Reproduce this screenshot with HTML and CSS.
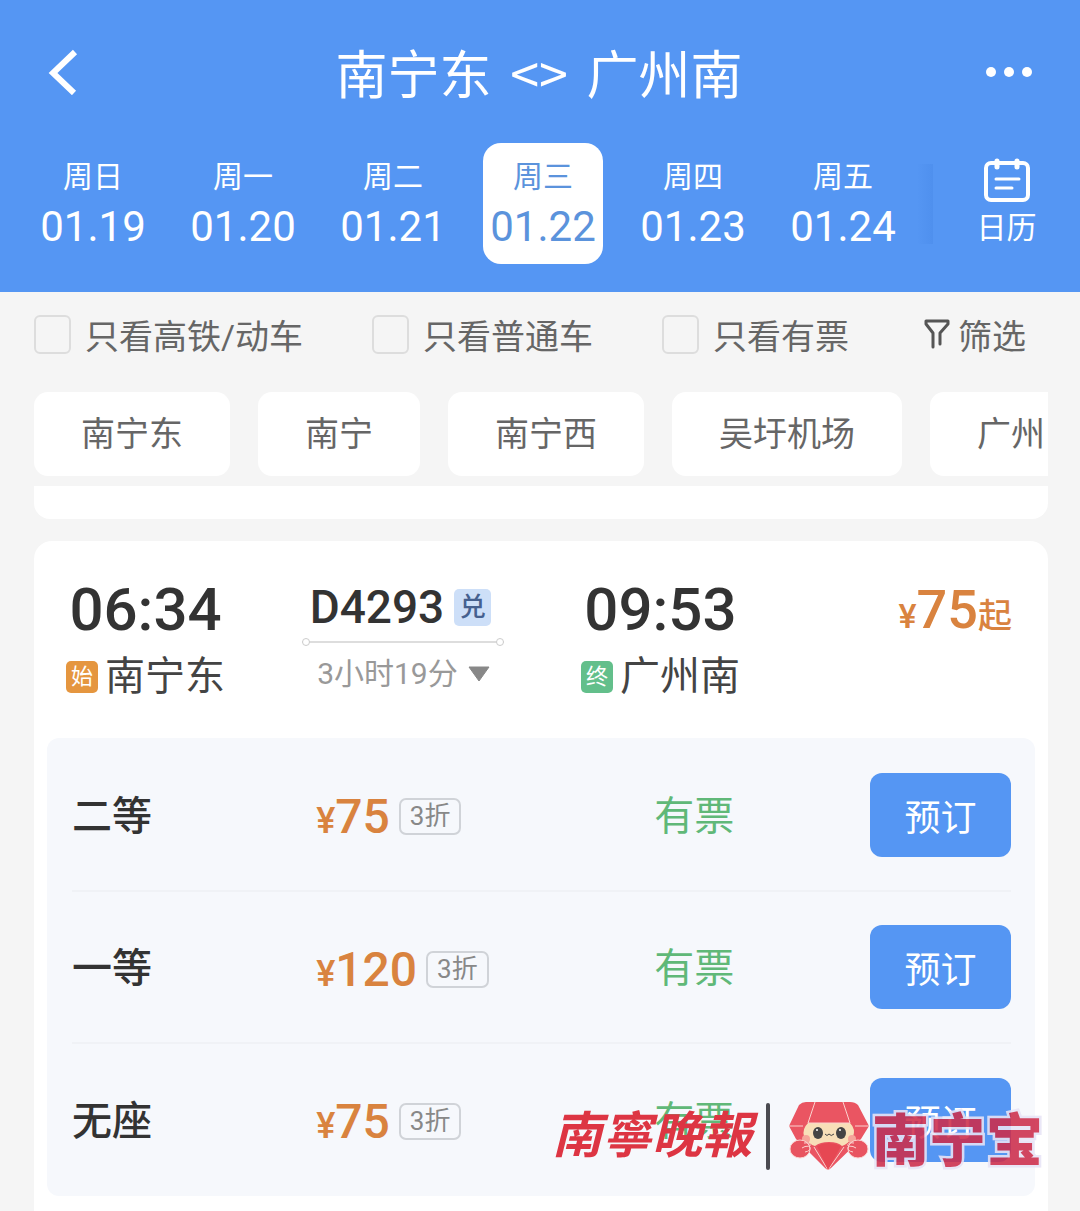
FILE: index.html
```html
<!DOCTYPE html>
<html lang="zh-CN">
<head>
    <meta charset="UTF-8">
    <meta name="viewport" content="width=device-width, initial-scale=1.0">
    <title>南宁东 - 广州南 车票查询</title>
    <link rel="stylesheet" href="styles.css">
</head>
<body>
    <header class="header">
        <div class="title-bar">
            <button class="icon-btn" type="button" aria-label="返回">
                <svg width="32" height="46" viewBox="0 0 32 46"><path d="M29 3 L7 24 L28 44" fill="none" stroke="#fff" stroke-width="6"/></svg>
            </button>
            <h1>南宁东 <span>&lt;&gt;</span> 广州南</h1>
            <button class="icon-btn" type="button" aria-label="更多">
                <svg width="46" height="12" viewBox="0 0 46 12" fill="#fff"><circle cx="5" cy="6" r="5"/><circle cx="23" cy="6" r="5"/><circle cx="41" cy="6" r="5"/></svg>
            </button>
        </div>
        <nav class="dates">
            <div class="date-list">
                <a class="date" href="#"><span>周日</span><b>01.19</b></a>
                <a class="date" href="#"><span>周一</span><b>01.20</b></a>
                <a class="date" href="#"><span>周二</span><b>01.21</b></a>
                <a class="date active" href="#"><span>周三</span><b>01.22</b></a>
                <a class="date" href="#"><span>周四</span><b>01.23</b></a>
                <a class="date" href="#"><span>周五</span><b>01.24</b></a>
            </div>
            <div class="date-shade"></div>
            <a class="calendar" href="#">
                <svg width="46" height="46" viewBox="0 0 46 46" fill="none" stroke="#fff" stroke-width="4" stroke-linecap="round">
                    <rect x="2" y="5" width="42" height="37" rx="5"/>
                    <path d="M13 3 V9 M33 3 V9" stroke-width="5"/>
                    <path d="M12 21 H35 M12 30 H28" stroke-width="3"/>
                </svg>
                <span>日历</span>
            </a>
        </nav>
    </header>

    <main>
        <form class="filters">
            <label><input type="checkbox">只看高铁/动车</label>
            <label><input type="checkbox">只看普通车</label>
            <label><input type="checkbox">只看有票</label>
            <button class="filter-btn" type="button">
                <svg width="26" height="30" viewBox="0 0 26 30" fill="none" stroke="#555" stroke-width="3" stroke-linejoin="round" stroke-linecap="round"><path d="M9 28 V14 L2 5 V2 H24 V5 L16 14 V25"/></svg>
                筛选
            </button>
        </form>

        <div class="stations">
            <button type="button">南宁东</button>
            <button type="button">南宁</button>
            <button type="button">南宁西</button>
            <button type="button">吴圩机场</button>
            <button type="button">广州</button>
        </div>

        <div class="card-end"></div>

        <section class="train">
            <div class="summary">
                <div class="stop">
                    <time>06:34</time>
                    <div class="place"><i class="mark start">始</i>南宁东</div>
                </div>
                <div class="trip">
                    <div class="number">D4293<i class="exchange">兑</i></div>
                    <div class="line"></div>
                    <button class="duration" type="button">3小时19分
                        <svg width="22" height="16" viewBox="0 0 22 16"><path d="M1 1 H21 L11 15 Z" fill="#888" stroke="#888" stroke-linejoin="round"/></svg>
                    </button>
                </div>
                <div class="stop">
                    <time>09:53</time>
                    <div class="place"><i class="mark end">终</i>广州南</div>
                </div>
                <div class="from-price"><small>¥</small>75<span>起</span></div>
            </div>

            <div class="seats">
                <table>
                    <tbody>
                        <tr>
                            <th scope="row">二等</th>
                            <td><div class="price"><span><small>¥</small>75</span><em>3折</em></div></td>
                            <td class="stock">有票</td>
                            <td><button class="book" type="button">预订</button></td>
                        </tr>
                        <tr>
                            <th scope="row">一等</th>
                            <td><div class="price"><span><small>¥</small>120</span><em>3折</em></div></td>
                            <td class="stock">有票</td>
                            <td><button class="book" type="button">预订</button></td>
                        </tr>
                        <tr>
                            <th scope="row">无座</th>
                            <td><div class="price"><span><small>¥</small>75</span><em>3折</em></div></td>
                            <td class="stock">有票</td>
                            <td><button class="book" type="button">预订</button></td>
                        </tr>
                    </tbody>
                </table>
            </div>

            <!-- 水印 -->
            <div class="watermark">
                <span class="paper">南寧晚報</span>
                <span class="bar"></span>
                <svg width="82" height="70" viewBox="0 0 82 70">
                    <path d="M11 4 Q14 1 18 1 H62 Q67 1 70 4 L81 25 L73 38 L43 67 Q40 70 37 67 L8 38 L1 25 Z" fill="#ea5562"/>
                    <path d="M20 22 H62 Q68 28 65 36 Q60 43 54 45 Q50 41 41 41 Q32 41 27 45 Q20 43 16 35 Q14 28 20 22 Z" fill="#f8dfb8"/>
                    <path d="M1 25 H15 M67 25 H81 M27 1 L20 22 H62 L55 1 M26 46 L40 69 L56 46" fill="none" stroke="#fbd3cf"/>
                    <path d="M29 45 Q40 39 53 45 L40 69 Z" fill="#e64753"/>
                    <circle cx="18" cy="38" r="4" fill="#f5a59a"/><circle cx="64" cy="38" r="4" fill="#f5a59a"/>
                    <ellipse cx="30" cy="32" rx="5" ry="6" fill="#444"/><ellipse cx="53" cy="32" rx="5" ry="6" fill="#444"/>
                    <circle cx="29" cy="29" r="1" fill="#fff"/><circle cx="52" cy="29" r="1" fill="#fff"/>
                    <path d="M37 33 Q39 36 41 33 Q43 36 46 33" fill="none" stroke="#444"/>
                    <ellipse cx="12" cy="48" rx="10" ry="9" fill="#e85460" stroke="#fbd3cf"/><ellipse cx="70" cy="48" rx="10" ry="9" fill="#e85460" stroke="#fbd3cf"/>
                    <path d="M16 42 q7 -1 6 3 q-6 0 -8 2 M22 46 q1 4 -5 5 M66 42 q-7 -1 -6 3 q6 0 8 2 M60 46 q-1 4 5 5" fill="none" stroke="#fbd3cf"/>
                </svg>
                <span class="brand">南宁宝</span>
            </div>
        </section>
    </main>
</body>
</html>
```

FILE: styles.css
```css
* {
    box-sizing: border-box;
}

body {
    margin: 0;
    background-color: #f5f5f5;
    color: #333;
    font-family: Roboto, "Noto Sans CJK SC", sans-serif;
}

button {
    padding: 0;
    border: 0;
    background: none;
    color: inherit;
    font-family: inherit;
}

a {
    color: inherit;
    text-decoration: none;
}

i, em {
    font-style: normal;
}

svg {
    display: block;
    flex: none;
}

/* 顶部 */
.header {
    background-color: #5596f3;
    color: #fff;
    padding-bottom: 28px;
}

.title-bar {
    display: flex;
    justify-content: space-between;
    align-items: center;
    height: 143px;
    padding: 0 48px 0 46px;
}

.title-bar h1 {
    margin: 0;
    font-family: "Noto Sans CJK SC", sans-serif;
    font-size: 52px;
    font-weight: 400;
    line-height: 76px;
}

.title-bar h1 span {
    margin: 0 7px;
}

.icon-btn {
    width: 46px;
}

.dates {
    display: flex;
    align-items: center;
}

.date-list {
    flex: 1;
    display: flex;
    justify-content: space-between;
    padding-left: 33px;
}

.date {
    display: flex;
    flex-direction: column;
    align-items: center;
    width: 120px;
    height: 121px;
    padding-top: 14px;
    border-radius: 18px;
}

.date span {
    font-size: 30px;
    line-height: 40px;
}

.date b {
    font-size: 42px;
    font-weight: 400;
    line-height: 60px;
}

.date.active {
    background-color: #fff;
    color: #5b93dc;
}

.date-shade {
    width: 16px;
    height: 80px;
    margin-left: 14px;
    background: linear-gradient(to right, #5596f3, #4f90ee);
}

.calendar {
    display: flex;
    flex-direction: column;
    align-items: center;
    width: 147px;
    padding-top: 2px;
    font-size: 30px;
    line-height: 48px;
}

/* 筛选 */
.filters {
    display: flex;
    justify-content: space-between;
    align-items: center;
    height: 84px;
    padding: 0 54px 0 34px;
    color: #666;
    font-size: 34px;
}

.filters label {
    display: flex;
    align-items: center;
    gap: 14px;
}

.filters input {
    appearance: none;
    width: 37px;
    height: 39px;
    margin: 0;
    border: 2px solid #ddd;
    border-radius: 6px;
}

.filter-btn {
    display: flex;
    align-items: center;
    gap: 8px;
    margin-left: 6px;
    font-size: 34px;
}

.stations {
    display: flex;
    gap: 28px;
    margin: 16px 32px 0 34px;
    overflow: hidden;
}

.stations button {
    flex: none;
    height: 84px;
    padding: 0 47px 6px;
    border-radius: 14px;
    background-color: #fff;
    color: #666;
    font-size: 34px;
}

/* 车次卡片 */
.card-end {
    height: 33px;
    margin: 10px 32px 22px 34px;
    border-radius: 0 0 16px 16px;
    background-color: #fff;
}

.train {
    position: relative;
    margin: 0 32px 0 34px;
    padding: 32px 13px 15px;
    border-radius: 18px 18px 0 0;
    background-color: #fff;
}

.summary {
    display: grid;
    grid-template-columns: 236fr 278fr 317fr auto;
    justify-items: start;
    height: 165px;
    padding: 0 23px 0 19px;
}

.stop {
    display: flex;
    flex-direction: column;
    align-items: center;
}

.stop time {
    font-size: 60px;
    font-weight: 500;
    line-height: 74px;
}

.place {
    display: flex;
    align-items: center;
    gap: 7px;
    color: #444;
    font-size: 40px;
    line-height: 60px;
}

.mark {
    width: 32px;
    height: 32px;
    border-radius: 5px;
    color: #fff;
    font-size: 22px;
    line-height: 32px;
    text-align: center;
}

.mark.start {
    background-color: #e5963f;
}

.mark.end {
    background-color: #63bf8b;
}

.trip {
    display: flex;
    flex-direction: column;
    align-items: center;
    width: 202px;
}

.number {
    display: flex;
    align-items: center;
    gap: 10px;
    padding-right: 6px;
    font-size: 46px;
    font-weight: 500;
    line-height: 68px;
}

.exchange {
    width: 37px;
    height: 37px;
    border-radius: 5px;
    background-color: #cddff8;
    color: #45608f;
    font-size: 26px;
    line-height: 36px;
    text-align: center;
}

.line {
    display: flex;
    align-items: center;
    justify-content: space-between;
    width: 100%;
    height: 2px;
    background-color: #ddd;
}

.line::before,
.line::after {
    content: "";
    width: 6px;
    height: 6px;
    border: 1px solid #ccc;
    border-radius: 50%;
    background-color: #fff;
}

.duration {
    display: flex;
    align-items: center;
    gap: 10px;
    color: #999;
    font-size: 30px;
    line-height: 62px;
}

.from-price {
    color: #d9833f;
    font-size: 54px;
    font-weight: 500;
    line-height: 74px;
}

.from-price small,
.from-price span {
    font-size: 34px;
}

/* 座位列表 */
.seats {
    padding: 1px 24px 1px 25px;
    border-radius: 12px;
    background-color: #f6f8fc;
}

table {
    width: 100%;
    table-layout: fixed;
    border-collapse: collapse;
}

tr + tr {
    border-top: 2px solid #f0f2f6;
}

th, td {
    height: 152px;
    padding: 0;
    text-align: left;
}

th {
    width: 26%;
    padding-bottom: 4px;
    font-size: 40px;
    font-weight: 500;
}

td:nth-child(2) {
    width: 36%;
}

td:nth-child(3) {
    width: 23%;
}

.price {
    display: flex;
    align-items: center;
    gap: 9px;
    padding-top: 4px;
    color: #d9833f;
    font-size: 48px;
    font-weight: 500;
}

.price small {
    font-size: 36px;
}

.price em {
    height: 37px;
    padding: 0 9px;
    border: 2px solid #d0d3d8;
    border-radius: 7px;
    color: #888;
    font-size: 26px;
    font-weight: 400;
    line-height: 32px;
}

.stock {
    padding-bottom: 4px;
    color: #60b878;
    font-size: 40px;
}

.book {
    width: 100%;
    height: 84px;
    border-radius: 12px;
    background-color: #5596f3;
    color: #fff;
    font-size: 36px;
}

.watermark {
    position: absolute;
    right: 5px;
    bottom: 39px;
    display: flex;
    align-items: center;
    height: 72px;
    color: #dd3543;
}

.paper {
    padding-bottom: 10px;
    font-size: 50px;
    font-style: italic;
    font-weight: 700;
}

.bar {
    width: 4px;
    height: 67px;
    margin: 0 18px 0 14px;
    border-radius: 2px;
    background-color: #4a4a50;
}

.brand {
    margin-left: 2px;
    color: #cd2d4b;
    font-size: 57px;
    font-weight: 900;
    opacity: 0.88;
    -webkit-text-stroke: 5px #e8e4f6;
    paint-order: stroke fill;
}
```
